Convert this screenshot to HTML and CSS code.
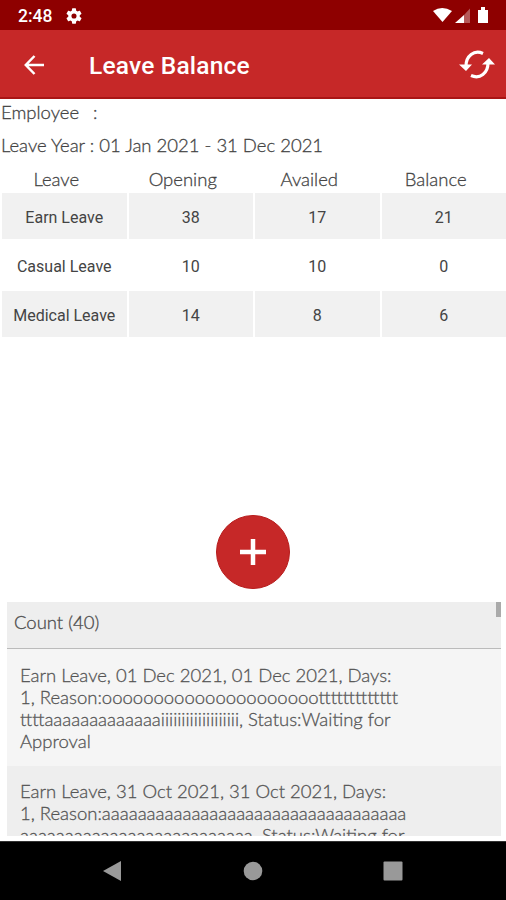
FILE: index.html
```html
<!DOCTYPE html>
<html lang="en">
<head>
<meta charset="utf-8">
<title>Leave Balance</title>
<link rel="stylesheet" href="styles.css">
</head>
<body>
<div class="status">
  <span class="clock">2:48</span>
  <svg class="gear" viewBox="2 2 20 20" width="16" height="16"><path fill="#fff" d="M19.14 12.94c.04-.3.06-.61.06-.94s-.02-.64-.07-.94l2.03-1.58a.5.5 0 0 0 .12-.61l-1.92-3.32a.5.5 0 0 0-.59-.22l-2.39.96a7 7 0 0 0-1.62-.94l-.36-2.54a.5.5 0 0 0-.48-.41h-3.84a.5.5 0 0 0-.47.41l-.36 2.54a7 7 0 0 0-1.62.94l-2.39-.96a.5.5 0 0 0-.59.22L2.74 8.87a.5.5 0 0 0 .12.61l2.03 1.58a6 6 0 0 0 0 1.88l-2.03 1.58a.5.5 0 0 0-.12.61l1.92 3.32c.12.22.37.29.59.22l2.39-.96c.5.38 1.03.7 1.62.94l.36 2.54c.05.24.24.41.48.41h3.84c.24 0 .44-.17.47-.41l.36-2.54a7 7 0 0 0 1.62-.94l2.39.96c.22.08.47 0 .59-.22l1.92-3.32a.5.5 0 0 0-.12-.61zM12 15.2a3.2 3.2 0 1 1 0-6.4 3.2 3.2 0 0 1 0 6.4z"/></svg>
  <svg class="signals" viewBox="0 0 60 18" width="60" height="18"><path fill="#fff" d="M2 4Q11-2 21 4L11.500 15Z"/><path fill="#fff" d="M24 16 33 8V16Z"/><path fill="#fff" opacity=".35" d="M33 8 39 1.500V16H33Z"/><path fill="#fff" d="M47 3h3V0h4v3h3v13H47Z"/></svg>
</div>
<header class="appbar">
  <svg class="back" viewBox="0 0 20 20" width="20" height="20"><path d="M20 10H1.800M10.500 1 1.800 10 10.500 19" fill="none" stroke="#fff" stroke-width="2.500"/></svg>
  <h1>Leave Balance</h1>
  <svg class="sync" viewBox="0 0 36 30" width="36" height="30"><g fill="none" stroke="#fff" stroke-width="3.200"><path d="M24 3.500C15-.5 7 6 7 16"/><path d="M12 25.500C21 29.500 29 23 29 13"/></g><path fill="#fff" d="M0 14.500H13L7 21ZM23 14.500H36L30 8Z"/></svg>
</header>
<main>
  <p class="info employee"><span>Employee</span><span>:</span></p>
  <p class="info year">Leave Year : 01 Jan 2021 - 31 Dec 2021</p>
  <div class="grid head"><span>Leave</span><span>Opening</span><span>Availed</span><span>Balance</span></div>
  <div class="grid row shade"><span>Earn Leave</span><span>38</span><span>17</span><span>21</span></div>
  <div class="grid row"><span>Casual Leave</span><span>10</span><span>10</span><span>0</span></div>
  <div class="grid row shade"><span>Medical Leave</span><span>14</span><span>8</span><span>6</span></div>
  <div class="action"><button class="add" aria-label="Add"><svg viewBox="0 0 26 26" width="26" height="26"><path d="M13 0V26M0 13H26" stroke="#fff" stroke-width="4.500"/></svg></button></div>
  <section class="list">
    <div class="count">Count (40)</div>
    <div class="item">Earn Leave, 01 Dec 2021, 01 Dec 2021, Days:<br>1, Reason:ooooooooooooooooooooottttttttttttt<br>ttttaaaaaaaaaaaaaiiiiiiiiiiiiiiiiiii, Status:Waiting for<br>Approval</div>
    <div class="item alt">Earn Leave, 31 Oct 2021, 31 Oct 2021, Days:<br>1, Reason:aaaaaaaaaaaaaaaaaaaaaaaaaaaaaaaaaa<br>aaaaaaaaaaaaaaaaaaaaaaaaaa, Status:Waiting for</div>
    <i class="thumb"></i>
  </section>
</main>
<nav class="nav">
  <svg viewBox="0 0 20 22" width="20" height="22"><path fill="#999" d="M0 11 18 1V21Z"/></svg>
  <svg viewBox="0 0 20 20" width="20" height="20"><circle cx="10" cy="10" r="9.300" fill="#999"/></svg>
  <svg viewBox="0 0 20 20" width="20" height="20"><rect x=".5" y=".5" width="19" height="19" rx="1" fill="#999"/></svg>
</nav>
</body>
</html>
```
FILE: styles.css
```css
* { box-sizing: border-box; }
body { margin: 0; width: 506px; height: 900px; overflow: hidden; display: flex; flex-direction: column; background: #fff; color: #444; font-family: Lato, sans-serif; font-weight: 300; font-size: 18.5px; }
.status { height: 30px; background: #8e0000; display: flex; align-items: center; padding: 1px 16px 0 18px; color: #fff; font: 500 17.5px Roboto, sans-serif; }
.clock { width: 48px; }
.signals { margin-left: auto; margin-right: -1px; }
.appbar { height: 69px; background: #c62828; border-bottom: 2px solid #a91515; display: flex; align-items: center; padding: 2px 11px 0 24px; color: #fff; }
.appbar h1 { margin: 0 auto 0 45px; padding-top: 2px; font: 500 24.5px Roboto, sans-serif; letter-spacing: .2px; }
main { height: 742px; display: flex; flex-direction: column; }
.info { margin: 0; padding-left: 1px; line-height: 26px; -webkit-text-stroke: .3px #444; }
.employee { display: flex; gap: 14px; height: 32px; }
.year { height: 35px; line-height: 28px; }
.grid { display: grid; grid-template-columns: repeat(4, 1fr); text-align: center; }
.head { height: 27px; line-height: 26px; margin-left: -7px; margin-right: 7px; -webkit-text-stroke: .3px #444; }
.row { height: 46px; line-height: 49px; padding-left: 2px; margin-bottom: 3px; column-gap: 2px; font-family: Roboto, sans-serif; font-weight: 400; font-size: 16px; }
.row span { height: 46px; }
.shade span { background: #f1f1f1; }
.action { flex: 1; display: flex; align-items: flex-end; justify-content: center; padding-bottom: 13px; }
.add { width: 74px; height: 74px; border: 1px solid #b71c1c; border-radius: 50%; padding: 0; background: #c62828; display: flex; align-items: center; justify-content: center; }
.list { position: relative; height: 234px; margin: 0 5px 5px 7px; overflow: hidden; -webkit-text-stroke: .3px #555; }
.count { height: 47px; padding: 0 7px; line-height: 40px; background: #eee; border-bottom: 1px solid #bbb; }
.item { height: 117px; padding: 15px 13px; line-height: 22px; background: #f5f5f5; color: #555; white-space: nowrap; }
.alt { background: #eee; padding-top: 14px; }
.thumb { position: absolute; right: 0; top: 0; width: 5px; height: 15px; background: #aaa; }
.nav { height: 59px; background: #000; border-top: 1px solid #333; display: grid; grid-template-columns: repeat(3, 140px); justify-content: center; align-items: center; justify-items: center; }
```
